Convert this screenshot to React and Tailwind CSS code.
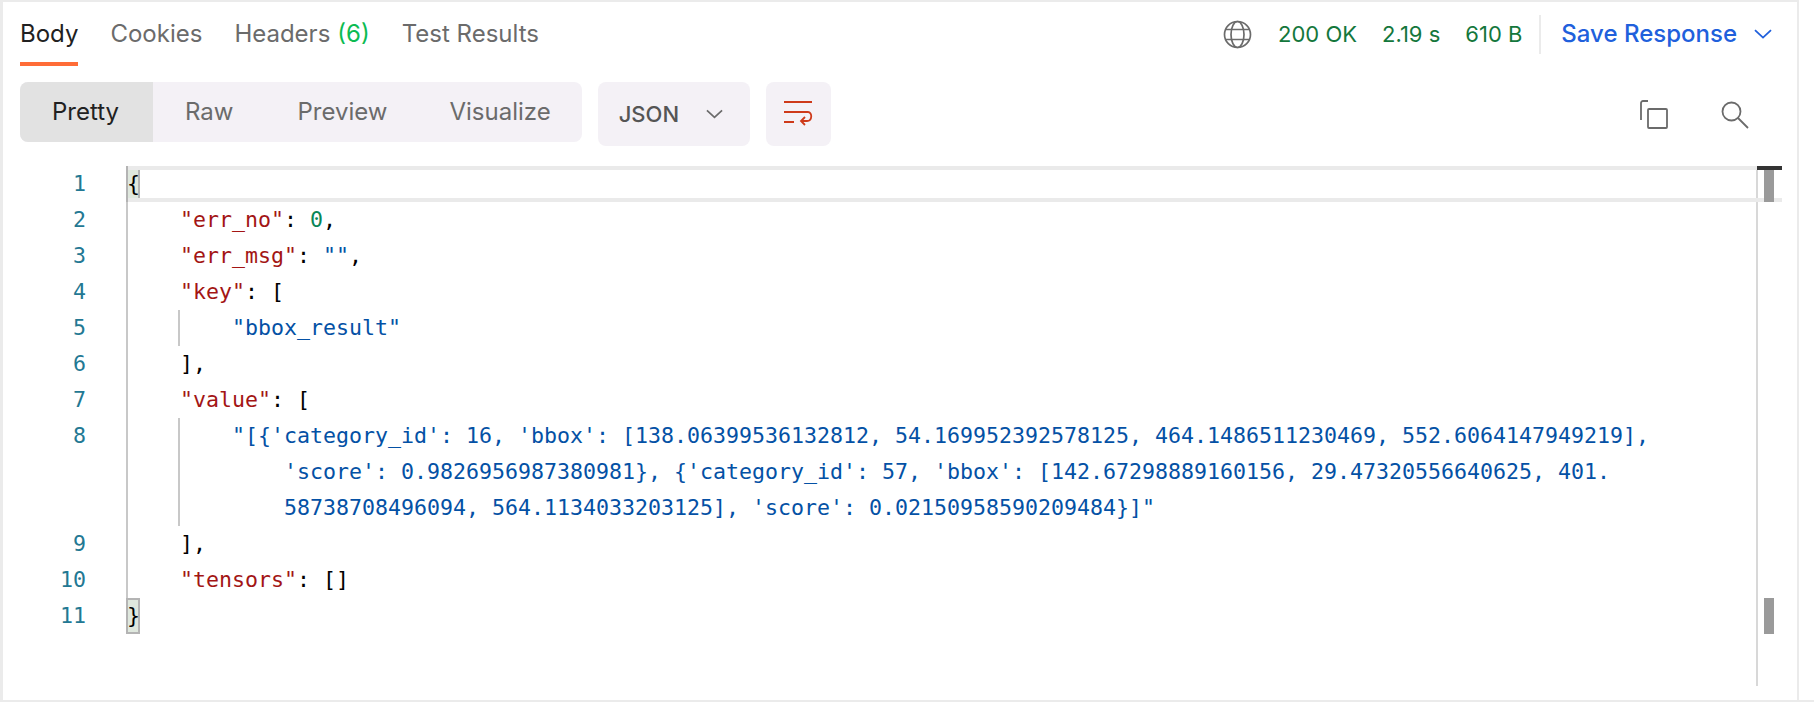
import React from 'react';

const codeFont = { fontFamily: '"DejaVu Sans Mono", monospace' };

function Chevron({ className }) {
  return (
    <svg className={className} viewBox="0 0 18 10" fill="none" stroke="currentColor" strokeWidth="1.8">
      <path d="M1 1.2l8 7.4 8-7.4" />
    </svg>
  );
}

function Key({ children }) {
  return <span className="text-[#a31515]">{children}</span>;
}

function Str({ children }) {
  return <span className="text-[#0451a5]">{children}</span>;
}

function Line({ n, guide, box, children }) {
  return (
    <div className="flex h-9 leading-9">
      <div className="w-[123px] shrink-0 pr-[40px] text-right text-[#237893]">{n}</div>
      {box ? (
        <div className="h-9 w-[14px] border-2 border-[#b4b4b4] bg-[#dfe8de] leading-8 text-black">
          <span className="-ml-[1px] block whitespace-pre">{children}</span>
        </div>
      ) : (
        <div className="flex flex-1 border-l-2 border-[#c8c8c8]">
          {guide && <div className="ml-[50px] w-[2px] shrink-0 bg-[#c8c8c8]" />}
          <div className="whitespace-pre pl-[52px] text-black">{children}</div>
        </div>
      )}
    </div>
  );
}

export default function App() {
  return (
    <div
      className="h-[702px] w-[1814px] overflow-hidden bg-white pr-[15px]"
      style={{ fontFamily: 'Inter, sans-serif' }}
    >
      <div className="h-[700px] border-t-2 border-r-2 border-l-[3px] border-[#ebebeb] text-[24px]">
        {/* Response tabs */}
        <div className="flex h-[64px] items-center justify-between pl-[17px] pr-[25px]">
          <div className="flex h-full gap-[32px]">
            <div className="flex items-center border-b-4 border-[#ff6c37] pt-[4px] text-[#212121]">Body</div>
            <div className="flex items-center border-b-4 border-transparent pt-[4px] text-[#6b6b6b]">Cookies</div>
            <div className="flex items-center gap-[7px] border-b-4 border-transparent pt-[4px] text-[#6b6b6b]">
              Headers <span className="text-[#0cbb52]">(6)</span>
            </div>
            <div className="flex items-center border-b-4 border-transparent pt-[4px] text-[#6b6b6b]">Test Results</div>
          </div>
          <div className="flex items-center">
            <svg className="h-[29px] w-[29px] text-[#6b6b6b]" viewBox="0 0 29 29" fill="none" stroke="currentColor" strokeWidth="1.7">
              <circle cx="14.5" cy="14.5" r="13" />
              <ellipse cx="14.5" cy="14.5" rx="6.5" ry="13" />
              <path d="M3 9.5h23M3 19.5h23" />
            </svg>
            <span className="ml-[26px] text-[22px] text-[#14773c]">200 OK</span>
            <span className="ml-[25px] text-[22px] text-[#14773c]">2.19 s</span>
            <span className="ml-[25px] text-[22px] text-[#14773c]">610 B</span>
            <div className="ml-[17px] h-[39px] w-[2px] bg-[#ebebeb]" />
            <span className="ml-[20px] font-medium text-[#2060dc]">Save Response</span>
            <Chevron className="ml-[17px] h-[10px] w-[18px] text-[#2060dc]" />
          </div>
        </div>

        {/* Toolbar */}
        <div className="mt-[16px] flex h-[64px] items-start pl-[17px] pr-[48px]">
          <div className="flex h-[60px] items-center overflow-hidden rounded-lg bg-[#f4f1f6] text-[#6b6b6b]">
            <div className="flex h-full items-center bg-[#e2e2e2] pr-[34px] pl-8 text-[#212121]">Pretty</div>
            <div className="px-8">Raw</div>
            <div className="pr-[30px] pl-8">Preview</div>
            <div className="pr-[31px] pl-8">Visualize</div>
          </div>
          <div className="ml-[16px] flex h-[64px] w-[152px] items-center rounded-lg bg-[#f4f1f6] pl-[21px] text-[22px] font-medium text-[#555555]">
            JSON
            <Chevron className="ml-[27px] h-[10px] w-[17px] text-[#6b6b6b]" />
          </div>
          <div className="ml-[16px] flex h-[64px] w-[65px] items-center justify-center rounded-lg bg-[#f4f1f6]">
            <svg className="h-[28px] w-[30px] text-[#ce3a1a]" viewBox="0 0 30 28" fill="none" stroke="currentColor" strokeWidth="1.8">
              <path d="M1 2h28M1 12h24c4.5 0 4.5 9-1 9h-5M1 22h10" />
              <path d="M22 17l-4 4 4 4" />
            </svg>
          </div>
          <div className="ml-auto flex items-center gap-[53px] pt-[18px] text-[#6b6b6b]">
            <svg className="h-[29px] w-[28px]" viewBox="0 0 28 29" fill="none" stroke="currentColor" strokeWidth="1.8">
              <path d="M8 1H3a2 2 0 0 0-2 2v17" />
              <rect x="8" y="9" width="19" height="19" rx="1" />
            </svg>
            <svg className="h-[28px] w-[28px]" viewBox="0 0 28 28" fill="none" stroke="currentColor" strokeWidth="1.8">
              <circle cx="10.5" cy="10.5" r="9" />
              <path d="M17 17l10 10" />
            </svg>
          </div>
        </div>

        {/* Editor */}
        <div className="relative mt-[20px] flex h-[520px] text-[21.6px]" style={codeFont}>
          <div className="min-w-0 flex-1">
            <Line n={1} box>{'{'}</Line>
            <Line n={2}>
              <Key>"err_no"</Key>: <span className="text-[#098658]">0</span>,
            </Line>
            <Line n={3}>
              <Key>"err_msg"</Key>: <Str>""</Str>,
            </Line>
            <Line n={4}>
              <Key>"key"</Key>: [
            </Line>
            <Line n={5} guide>
              <Str>"bbox_result"</Str>
            </Line>
            <Line n={6}>],</Line>
            <Line n={7}>
              <Key>"value"</Key>: [
            </Line>
            <Line n={8} guide>
              <Str>"[{"{"}'category_id': 16, 'bbox': [138.06399536132812, 54.169952392578125, 464.1486511230469, 552.6064147949219],</Str>
            </Line>
            <Line guide>
              <Str>{"    'score': 0.9826956987380981}, {'category_id': 57, 'bbox': [142.67298889160156, 29.47320556640625, 401."}</Str>
            </Line>
            <Line guide>
              <Str>{"    58738708496094, 564.1134033203125], 'score': 0.02150958590209484}]\""}</Str>
            </Line>
            <Line n={9}>],</Line>
            <Line n={10}>
              <Key>"tensors"</Key>: []
            </Line>
            <Line n={11} box>{'}'}</Line>
          </div>
          <div className="w-[41px] shrink-0 border-l-2 border-[#d8d8d8]" />

          {/* current line highlight and overview ruler */}
          <div className="absolute top-0 left-[125px] h-9 w-[1654px] border-y-4 border-[#eaeaea]" />
          <div className="absolute top-0 right-[15px] h-1 w-[25px] bg-[#333333]" />
          <div className="absolute top-1 right-[23px] h-8 w-[10px] bg-[#9a9a9a]" />
          <div className="absolute top-[432px] right-[23px] h-9 w-[10px] bg-[#9a9a9a]" />
        </div>
      </div>
      <div className="h-[2px] w-[1814px] bg-[#ebebeb]" />
    </div>
  );
}
